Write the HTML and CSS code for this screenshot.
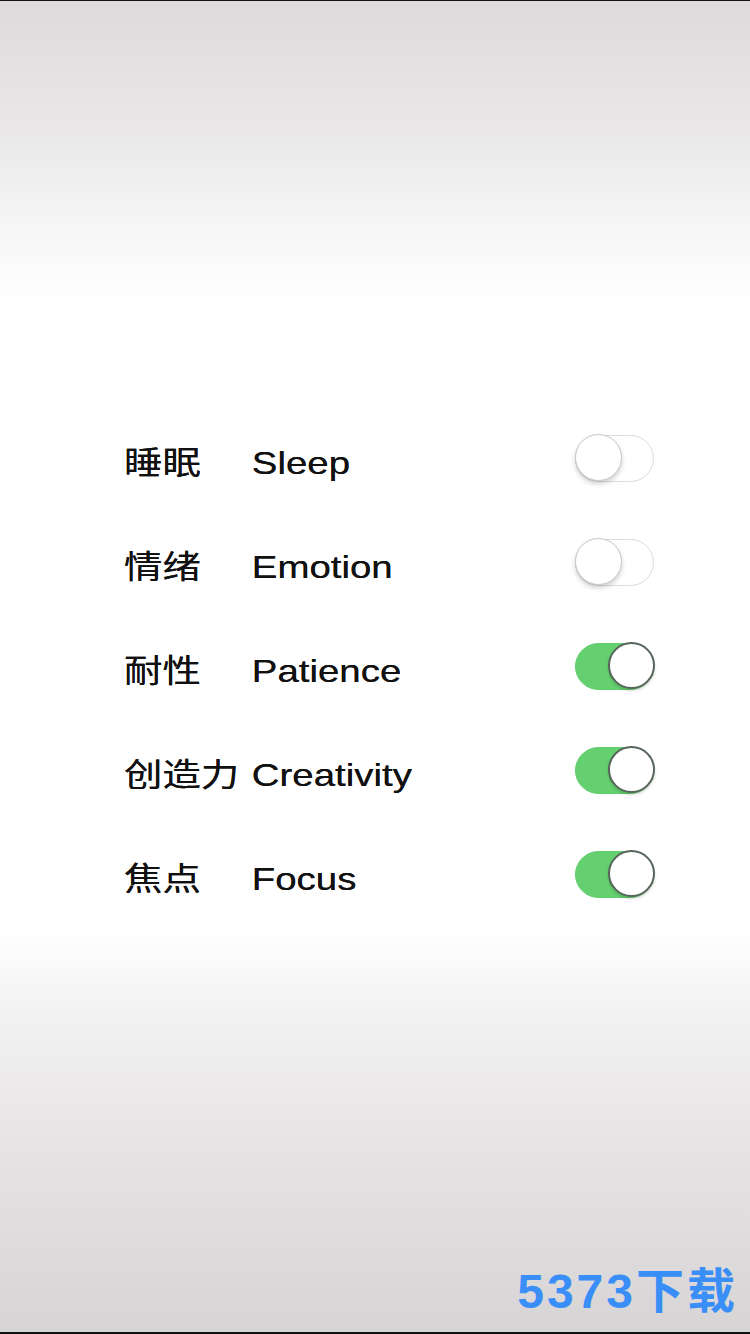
FILE: index.html
```html
<!DOCTYPE html>
<html lang="zh-CN">
<head>
    <meta charset="UTF-8">
    <meta name="viewport" content="width=device-width, initial-scale=1.0">
    <title>设置</title>
    <link rel="stylesheet" href="styles.css">
</head>
<body>
    <div class="screen">
        <ul class="settings">
            <li class="setting-row">
                <div class="label"><span class="zh">睡眠</span><span class="en">Sleep</span></div>
                <div class="toggle"><span class="knob"></span></div>
            </li>
            <li class="setting-row">
                <div class="label"><span class="zh">情绪</span><span class="en">Emotion</span></div>
                <div class="toggle"><span class="knob"></span></div>
            </li>
            <li class="setting-row">
                <div class="label"><span class="zh">耐性</span><span class="en">Patience</span></div>
                <div class="toggle on"><span class="knob"></span></div>
            </li>
            <li class="setting-row">
                <div class="label"><span class="zh">创造力</span><span class="en">Creativity</span></div>
                <div class="toggle on"><span class="knob"></span></div>
            </li>
            <li class="setting-row">
                <div class="label"><span class="zh">焦点</span><span class="en">Focus</span></div>
                <div class="toggle on"><span class="knob"></span></div>
            </li>
        </ul>
        <div class="watermark">5373下载</div>
    </div>
</body>
</html>
```

FILE: styles.css
```css
body {
    margin: 0;
    padding: 0;
    font-family: "Liberation Sans", "Noto Sans CJK SC", sans-serif;
    color: #111;
}
.screen {
    position: relative;
    box-sizing: border-box;
    height: 1334px;
    border-top: 1px solid #111;
    border-bottom: 2px solid #111;
    background: linear-gradient(to bottom,
        #dddadb 0,
        #e8e6e7 120px,
        #f6f5f6 220px,
        #fff 300px,
        #fff 930px,
        #f3f2f3 1010px,
        #e6e3e4 1150px,
        #d7d4d5 1334px);
}
.settings {
    list-style: none;
    margin: 0;
    padding: 405px 96px 0 124px;
}
.setting-row {
    display: flex;
    align-items: center;
    justify-content: space-between;
    height: 104px;
}
.label {
    display: flex;
    align-items: baseline;
    margin-top: 4px;
    font-size: 32px;
    transform: scaleX(1.2);
    transform-origin: left center;
    text-shadow: 0 0 0.6px #111;
}
.zh {
    width: 106.5px;
    font-family: "Noto Sans CJK SC", sans-serif;
}
.en {
    font-family: "Liberation Sans", sans-serif;
}
.toggle {
    display: flex;
    justify-content: flex-start;
    box-sizing: border-box;
    width: 79px;
    height: 47px;
    border: 1.5px solid #dcdcdc;
    border-radius: 24px;
    background: #fff;
}
.knob {
    box-sizing: border-box;
    width: 47px;
    height: 47px;
    margin: -1.5px;
    border: 1.5px solid #c8c8c8;
    border-radius: 50%;
    background: #fff;
    box-shadow: 0 3px 5px rgba(0, 0, 0, 0.18);
}
.toggle.on {
    justify-content: flex-end;
    border-color: #5fcd6a;
    background: #64d06f;
}
.toggle.on .knob {
    border: 2px solid #56665a;
    box-shadow: 0 2px 3px rgba(0, 0, 0, 0.15);
}
.watermark {
    position: absolute;
    right: 12px;
    bottom: 10px;
    font-family: "Liberation Sans", "Noto Sans CJK SC", sans-serif;
    font-size: 48px;
    font-weight: bold;
    letter-spacing: 3px;
    color: #3a8ef7;
}
```
